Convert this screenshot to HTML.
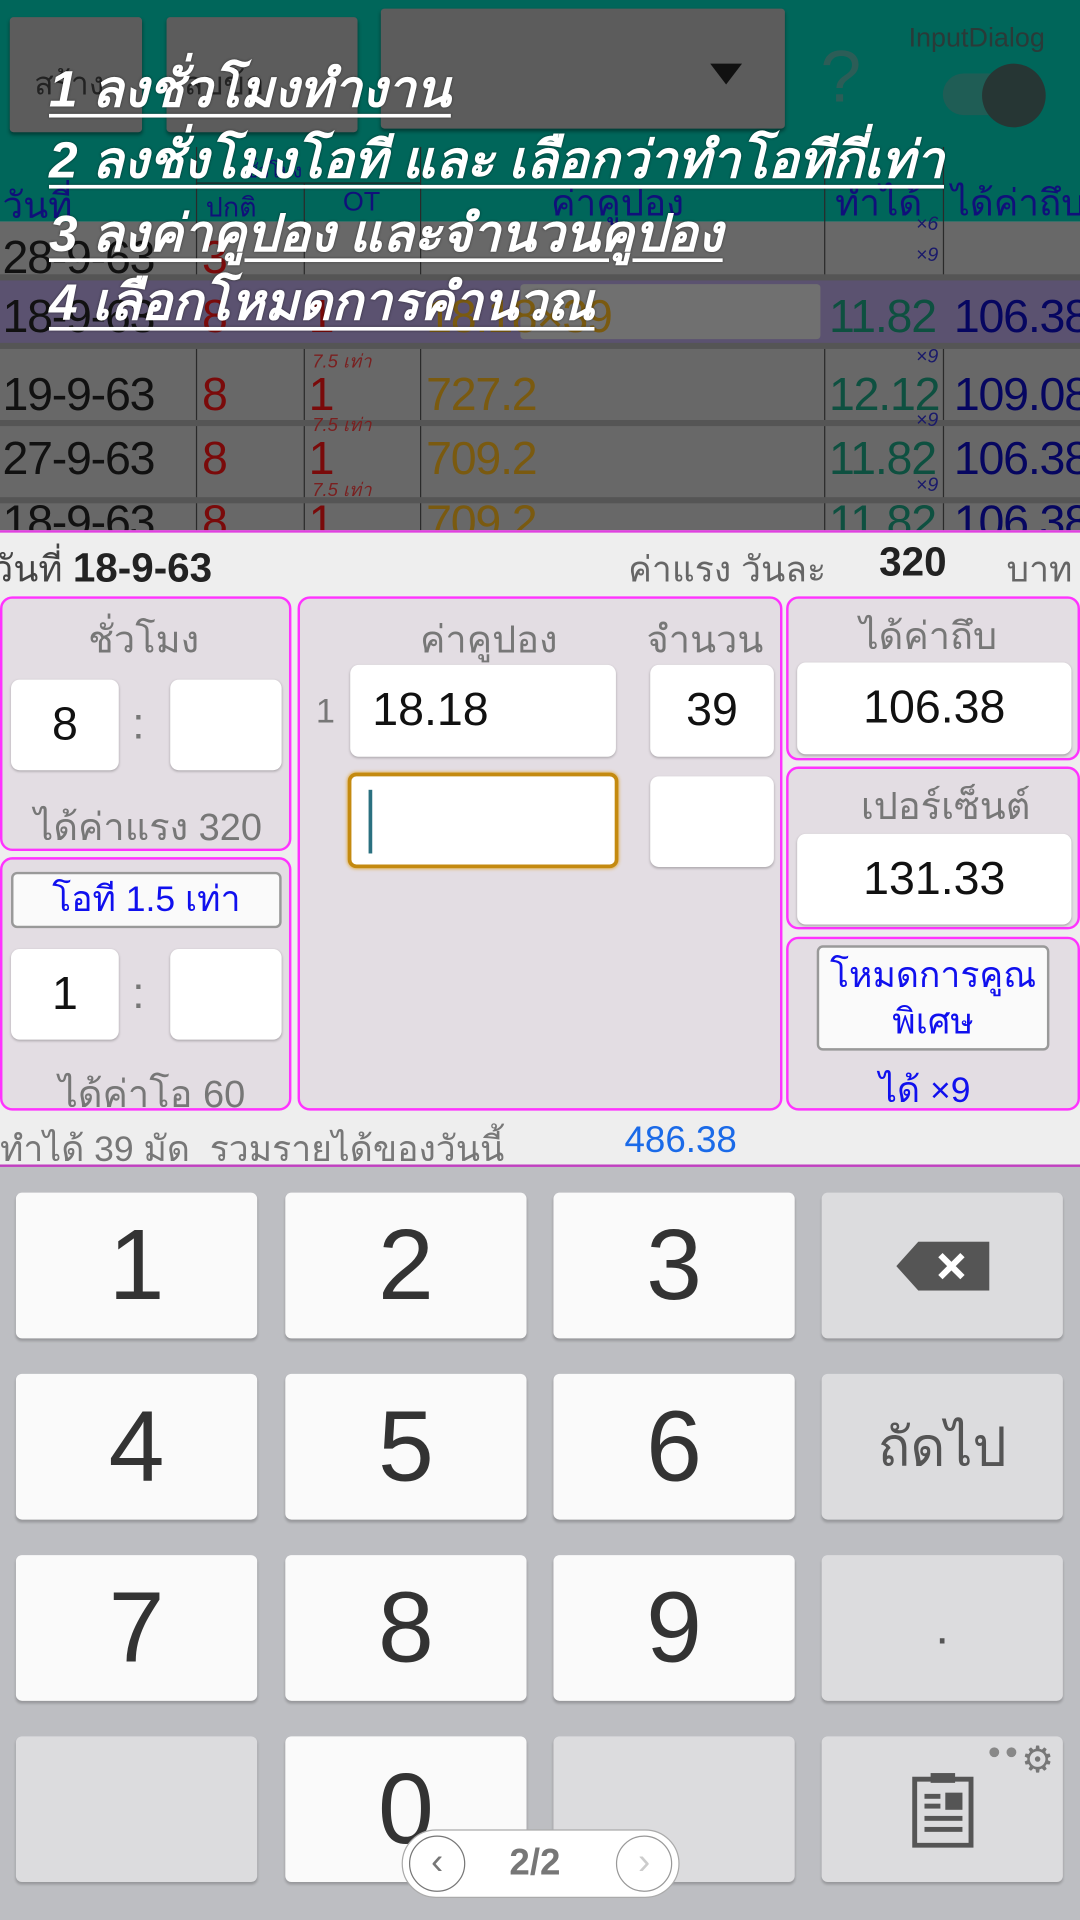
<!DOCTYPE html>
<html><head><meta charset="utf-8"><style>
*{margin:0;padding:0;box-sizing:border-box}
html,body{width:1080px;height:1920px;overflow:hidden;background:#bdbec2}
#w{position:absolute;left:0;top:0;width:882px;height:1568px;transform:scale(1.22449);transform-origin:0 0;font-family:"Liberation Sans","Noto Sans CJK SC",sans-serif}
.a{position:absolute}
.t{white-space:nowrap}
.btn{position:absolute;background:#5c5c5c;border-radius:3px;box-shadow:0 2px 3px rgba(0,0,0,.4)}
.vl{position:absolute;width:1px;background:#2a2a2a}
.hl{position:absolute;height:5px;background:#555;left:0;width:882px}
.ov{position:absolute;left:40px;color:#fff;font-style:italic;font-weight:bold;font-size:42px;text-decoration:underline;text-decoration-thickness:3px;text-underline-offset:6px;white-space:nowrap;text-shadow:0 0 2px rgba(0,0,0,.5)}
.box{position:absolute;border:2px solid #ff33ff;border-radius:10px;background:#e3dde3}
.inp{position:absolute;background:#fff;border-radius:7px;box-shadow:0 1px 2px rgba(0,0,0,.25);font-size:38px;color:#111;display:flex;align-items:center;justify-content:center}
.g{color:#777;font-size:31px}
.key{position:absolute;width:197px;height:119px;background:#fafafa;border-radius:5px;box-shadow:0 2px 2px rgba(0,0,0,.2);display:flex;align-items:center;justify-content:center;font-size:82px;color:#333}
.fk{background:#dcdcde}
</style></head><body><div id="w">
<div class="a" style="left:0;top:0;width:882px;height:181px;background:#00665a"></div>
<div class="a" style="left:0;top:181px;width:882px;height:254px;background:#686868"></div>
<div class="btn" style="left:8px;top:14px;width:108px;height:94px"></div>
<div class="btn" style="left:136px;top:14px;width:156px;height:94px"></div>
<div class="btn" style="left:311px;top:7px;width:330px;height:98px"></div>
<div class="a t" style="left:28px;top:48px;font-size:26px;color:#222">สร้าง</div>
<div class="a t" style="left:150px;top:48px;font-size:26px;color:#222">ลบข้อ</div>
<div class="a" style="left:580px;top:52px;width:0;height:0;border-left:13px solid transparent;border-right:13px solid transparent;border-top:17px solid #111"></div>
<div class="a t" style="left:670px;top:28px;font-size:60px;color:#2c5d57;">?</div>
<div class="a t" style="left:742px;top:18px;font-size:22px;color:#2a3a38">InputDialog</div>
<div class="a" style="left:770px;top:60px;width:80px;height:34px;border-radius:17px;background:#1f5d55"></div>
<div class="a" style="left:802px;top:52px;width:52px;height:52px;border-radius:26px;background:#263634"></div>
<div class="a t" style="left:2px;top:145px;font-size:30px;color:#10107a">วันที่</div>
<div class="a t" style="left:200px;top:128px;font-size:16px;color:#10107a">ชั่วโมง</div>
<div class="a" style="left:160px;top:149px;width:183px;height:1px;background:#222"></div>
<div class="a t" style="left:168px;top:152px;font-size:22px;color:#10107a">ปกติ</div>
<div class="a t" style="left:280px;top:152px;font-size:22px;color:#10107a">OT</div>
<div class="a t" style="left:450px;top:143px;font-size:30px;color:#10107a">ค่าคูปอง</div>
<div class="a t" style="left:682px;top:143px;font-size:30px;color:#10107a">ทำได้</div>
<div class="a t" style="left:777px;top:143px;font-size:30px;color:#10107a">ได้ค่าถึบ</div>
<div class="vl" style="left:160px;top:120px;height:315px"></div>
<div class="vl" style="left:248px;top:150px;height:285px"></div>
<div class="vl" style="left:343px;top:120px;height:315px"></div>
<div class="vl" style="left:673px;top:120px;height:315px"></div>
<div class="vl" style="left:770px;top:120px;height:315px"></div>
<div class="a" style="left:0;top:226px;width:882px;height:56px;background:#5b5270"></div>
<div class="a" style="left:425px;top:232px;width:245px;height:45px;background:#707070;border-radius:3px"></div>
<div class="hl" style="top:224px"></div><div class="hl" style="top:280px"></div><div class="hl" style="top:343px"></div><div class="hl" style="top:406px"></div>
<div style="font-size:38px;letter-spacing:-1px">
<div class="a t" style="left:2px;top:190px;color:#111">28-9-63</div><div class="a t" style="left:165px;top:190px;color:#7a0a0a">3</div>
<div class="a t" style="left:2px;top:238px;color:#111">18-9-63</div><div class="a t" style="left:165px;top:238px;color:#7a0a0a">8</div><div class="a t" style="left:252px;top:238px;color:#7a0a0a">1</div><div class="a t" style="left:348px;top:238px;color:#7a5a10">18.18×39</div><div class="a t" style="left:677px;top:238px;color:#0e5040">11.82</div><div class="a t" style="left:779px;top:238px;color:#060660">106.38</div>
<div class="a t" style="left:2px;top:302px;color:#111">19-9-63</div><div class="a t" style="left:165px;top:302px;color:#7a0a0a">8</div><div class="a t" style="left:252px;top:302px;color:#7a0a0a">1</div><div class="a t" style="left:348px;top:302px;color:#7a5a10">727.2</div><div class="a t" style="left:677px;top:302px;color:#0e5040">12.12</div><div class="a t" style="left:779px;top:302px;color:#060660">109.08</div>
<div class="a t" style="left:2px;top:354px;color:#111">27-9-63</div><div class="a t" style="left:165px;top:354px;color:#7a0a0a">8</div><div class="a t" style="left:252px;top:354px;color:#7a0a0a">1</div><div class="a t" style="left:348px;top:354px;color:#7a5a10">709.2</div><div class="a t" style="left:677px;top:354px;color:#0e5040">11.82</div><div class="a t" style="left:779px;top:354px;color:#060660">106.38</div>
<div class="a t" style="left:2px;top:406px;color:#111">18-9-63</div><div class="a t" style="left:165px;top:406px;color:#7a0a0a">8</div><div class="a t" style="left:252px;top:406px;color:#7a0a0a">1</div><div class="a t" style="left:348px;top:406px;color:#7a5a10">709.2</div><div class="a t" style="left:677px;top:406px;color:#0e5040">11.82</div><div class="a t" style="left:779px;top:406px;color:#060660">106.38</div>
</div>
<div style="font-size:15px;font-style:italic;color:#7a2020">
<div class="a t" style="left:255px;top:283px">7.5 เท่า</div><div class="a t" style="left:255px;top:335px">7.5 เท่า</div><div class="a t" style="left:255px;top:388px">7.5 เท่า</div></div>
<div style="font-size:16px;font-style:italic;color:#1a1a6a">
<div class="a t" style="left:748px;top:175px">×6</div><div class="a t" style="left:748px;top:200px">×9</div><div class="a t" style="left:748px;top:283px">×9</div><div class="a t" style="left:748px;top:335px">×9</div><div class="a t" style="left:748px;top:388px">×9</div></div>
<div class="ov" style="top:40px">1 ลงชั่วโมงทำงาน</div>
<div class="ov" style="top:98px">2 ลงชั่งโมงโอที และ เลือกว่าทำโอทีกี่เท่า</div>
<div class="ov" style="top:158px">3 ลงค่าคูปอง และจำนวนคูปอง</div>
<div class="ov" style="top:214px">4 เลือกโหมดการคำนวณ</div>
<div class="a" style="left:0;top:433px;width:882px;height:520px;background:#eeeeee;border-top:2px solid #e040e0;border-bottom:2px solid #c040c0"></div>
<div class="a t" style="left:-6px;top:442px;font-size:30px;color:#444">วันที่ <b style="color:#222;font-size:33px">18-9-63</b></div>
<div class="a t" style="left:513px;top:442px;font-size:29px;color:#666">ค่าแรง วันละ</div>
<div class="a t" style="left:718px;top:440px;font-size:33px;color:#222;font-weight:bold">320</div>
<div class="a t" style="left:822px;top:442px;font-size:29px;color:#666">บาท</div>
<div class="box" style="left:0;top:487px;width:238px;height:208px"></div>
<div class="a t g" style="left:72px;top:497px">ชั่วโมง</div>
<div class="inp" style="left:9px;top:555px;width:88px;height:74px">8</div>
<div class="a t" style="left:108px;top:570px;font-size:36px;color:#777">:</div>
<div class="inp" style="left:139px;top:555px;width:91px;height:74px"></div>
<div class="a t g" style="left:28px;top:650px">ได้ค่าแรง 320</div>
<div class="box" style="left:0;top:700px;width:238px;height:207px"></div>
<div class="a" style="left:9px;top:712px;width:221px;height:46px;background:#fafafa;border:2px solid #999;border-radius:5px;color:#1010ee;font-size:29px;text-align:center;line-height:42px">โอที 1.5 เท่า</div>
<div class="inp" style="left:9px;top:775px;width:88px;height:74px">1</div>
<div class="a t" style="left:108px;top:790px;font-size:36px;color:#777">:</div>
<div class="inp" style="left:139px;top:775px;width:91px;height:74px"></div>
<div class="a t g" style="left:48px;top:868px">ได้ค่าโอ 60</div>
<div class="box" style="left:243px;top:487px;width:396px;height:420px"></div>
<div class="a t g" style="left:343px;top:497px">ค่าคูปอง</div>
<div class="a t g" style="left:528px;top:497px">จำนวน</div>
<div class="a t" style="left:258px;top:565px;font-size:28px;color:#777">1</div>
<div class="inp" style="left:286px;top:543px;width:217px;height:75px;justify-content:flex-start;padding-left:18px">18.18</div>
<div class="inp" style="left:531px;top:543px;width:101px;height:75px">39</div>
<div class="inp" style="left:284px;top:631px;width:221px;height:78px;border:3px solid #c48a10;box-shadow:0 0 3px #e0a020"></div>
<div class="a" style="left:301px;top:645px;width:3px;height:52px;background:#2a7080"></div>
<div class="inp" style="left:531px;top:634px;width:101px;height:74px"></div>
<div class="box" style="left:642px;top:487px;width:240px;height:134px"></div>
<div class="a t g" style="left:702px;top:494px">ได้ค่าถึบ</div>
<div class="inp" style="left:651px;top:541px;width:224px;height:75px">106.38</div>
<div class="box" style="left:642px;top:626px;width:240px;height:133px"></div>
<div class="a t g" style="left:703px;top:633px">เปอร์เซ็นต์</div>
<div class="inp" style="left:651px;top:681px;width:224px;height:74px">131.33</div>
<div class="box" style="left:642px;top:765px;width:240px;height:142px"></div>
<div class="a" style="left:667px;top:772px;width:190px;height:86px;background:#fafafa;border:2px solid #999;border-radius:5px;color:#1010ee;font-size:29px;text-align:center;line-height:38px;padding-top:4px">โหมดการคูณ<br>พิเศษ</div>
<div class="a t" style="left:718px;top:867px;font-size:29px;color:#1010ee">ได้ ×9</div>
<div class="a t" style="left:0;top:915px;font-size:29px;color:#777">ทำได้ 39 มัด&nbsp; รวมรายได้ของวันนี้</div>
<div class="a t" style="left:510px;top:915px;font-size:30px;color:#1a6ae8">486.38</div>
<div class="key" style="left:13px;top:974px">1</div>
<div class="key" style="left:233px;top:974px">2</div>
<div class="key" style="left:452px;top:974px">3</div>
<div class="key fk" style="left:671px;top:974px"><svg width="76" height="40" viewBox="0 0 76 40"><path d="M0 20 L18 0 H76 V40 H18 Z" fill="#555"/><path d="M36 11 L54 29 M54 11 L36 29" stroke="#fff" stroke-width="5"/></svg></div>
<div class="key" style="left:13px;top:1122px">4</div>
<div class="key" style="left:233px;top:1122px">5</div>
<div class="key" style="left:452px;top:1122px">6</div>
<div class="key fk" style="left:671px;top:1122px;font-size:44px;color:#555">ถัดไป</div>
<div class="key" style="left:13px;top:1270px">7</div>
<div class="key" style="left:233px;top:1270px">8</div>
<div class="key" style="left:452px;top:1270px">9</div>
<div class="key fk" style="left:671px;top:1270px;font-size:40px;color:#555">.</div>
<div class="key fk" style="left:13px;top:1418px"></div>
<div class="key" style="left:233px;top:1418px">0</div>
<div class="key fk" style="left:452px;top:1418px"></div>
<div class="key fk" style="left:671px;top:1418px"><svg width="52" height="62" viewBox="0 0 52 62"><rect x="3" y="6" width="46" height="54" fill="none" stroke="#555" stroke-width="4"/><rect x="16" y="1" width="20" height="8" fill="#555"/><rect x="11" y="18" width="13" height="4" fill="#555"/><rect x="11" y="26" width="13" height="4" fill="#555"/><rect x="28" y="17" width="14" height="14" fill="#555"/><rect x="11" y="36" width="31" height="4" fill="#555"/><rect x="11" y="45" width="31" height="4" fill="#555"/></svg></div>
<div class="a" style="left:808px;top:1427px;width:8px;height:8px;border-radius:4px;background:#888"></div>
<div class="a" style="left:822px;top:1427px;width:8px;height:8px;border-radius:4px;background:#888"></div>
<div class="a t" style="left:834px;top:1420px;font-size:30px;color:#777">⚙</div>
<div class="a" style="left:328px;top:1494px;width:227px;height:56px;border-radius:28px;background:#fff;border:1px solid #aaa"></div>
<div class="a" style="left:334px;top:1499px;width:46px;height:46px;border-radius:23px;border:1px solid #777;text-align:center;line-height:42px;font-size:30px;color:#777">‹</div>
<div class="a" style="left:503px;top:1499px;width:46px;height:46px;border-radius:23px;border:1px solid #999;text-align:center;line-height:42px;font-size:30px;color:#ccc">›</div>
<div class="a t" style="left:416px;top:1505px;font-size:30px;font-weight:bold;color:#777">2/2</div>
</div></body></html>
